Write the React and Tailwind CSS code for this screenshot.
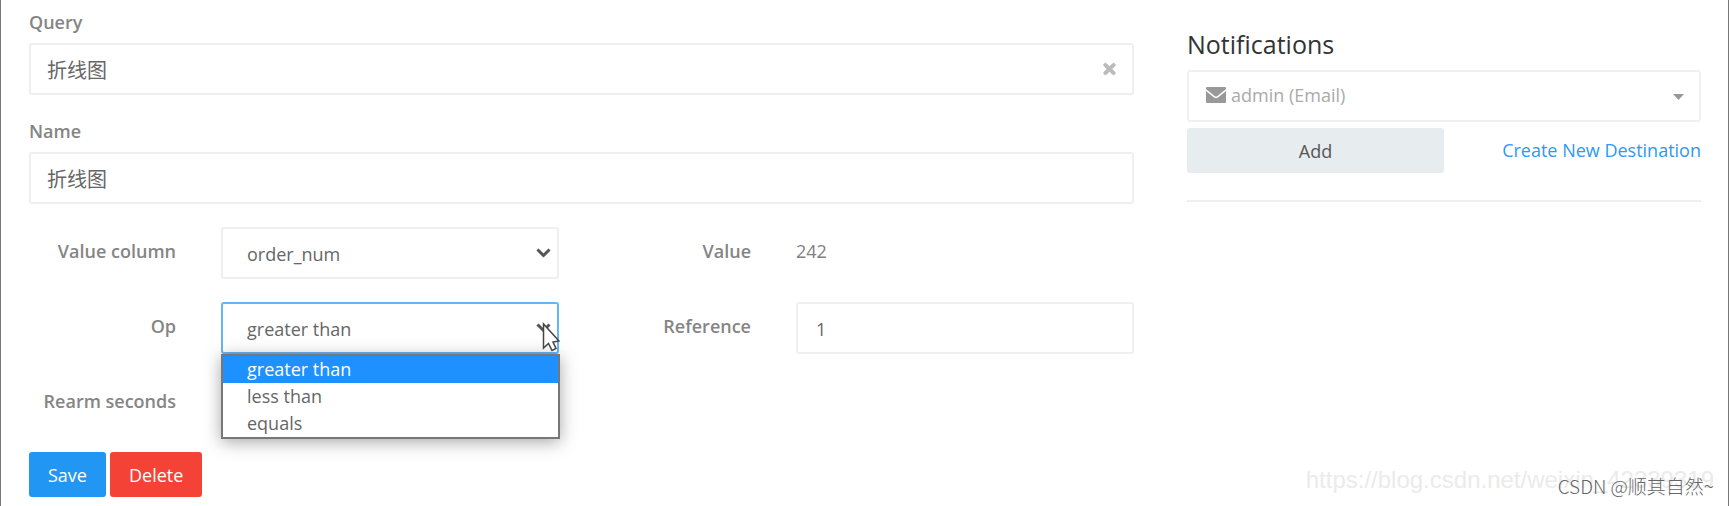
import React, { useState } from 'react';
import { FaTimes } from 'react-icons/fa';

const OPS = ['greater than', 'less than', 'equals'];

const fieldClass = 'w-full h-[52px] rounded-[3px] border-2 bg-white outline-none';

const labelClass = 'font-semibold text-[#858585]';

const Chevron = () => (
  <svg
    className="pointer-events-none absolute right-2 top-1/2 -translate-y-1/2"
    width="15"
    height="10"
    viewBox="0 0 15 10"
    fill="none"
    stroke="#555"
    strokeWidth="3"
  >
    <path d="M1.5 1.5 L7.5 7.5 L13.5 1.5" />
  </svg>
);

const Row = ({ label, htmlFor, children }) => (
  <div className="grid grid-cols-[147fr_338fr] gap-x-[45px]">
    <label htmlFor={htmlFor} className={`${labelClass} pt-[13px] text-right whitespace-nowrap`}>
      {label}
    </label>
    <div className="relative">{children}</div>
  </div>
);

const App = () => {
  const [form, setForm] = useState({
    query: '折线图',
    name: '折线图',
    column: 'order_num',
    op: 'greater than',
    reference: '1',
    rearm: '',
  });

  const handleChange = (e) => {
    setForm({ ...form, [e.target.name]: e.target.value });
  };

  return (
    <div className="relative min-h-screen overflow-hidden border-x border-[#777] bg-white pl-7 pr-[27px] pt-[11px] font-['Open_Sans','Noto_Sans_CJK_SC',sans-serif] text-[18px] leading-[22px]">
      <div className="grid grid-cols-[1105fr_514fr] gap-x-[53px]">
        <form onSubmit={(e) => e.preventDefault()}>
          <label htmlFor="query" className={`${labelClass} block mb-[10px]`}>Query</label>
          <div className="relative mb-[25px]">
            <input id="query" name="query" value={form.query} onChange={handleChange} className={`${fieldClass} border-[#efefef] px-4 text-[20px] text-[#666]`} />
            <button type="button" aria-label="Clear query" className="absolute right-4 top-1/2 -translate-y-1/2 text-[#bbb]">
              <FaTimes size={17} stroke="currentColor" strokeWidth="30" />
            </button>
          </div>

          <label htmlFor="name" className={`${labelClass} block mb-[10px]`}>Name</label>
          <input id="name" name="name" value={form.name} onChange={handleChange} className={`${fieldClass} block border-[#efefef] px-4 text-[20px] text-[#666]`} />

          <div className="mt-[23px] grid grid-cols-2 gap-x-[45px] gap-y-[23px]">
            <Row label="Value column" htmlFor="column">
              <select id="column" name="column" value={form.column} onChange={handleChange} className={`${fieldClass} appearance-none border-[#efefef] px-6 pt-[2px] text-[#666]`}>
                <option>order_num</option>
              </select>
              <Chevron />
            </Row>
            <Row label="Value">
              <p className="pt-[13px] text-[#808080]">242</p>
            </Row>
            <Row label="Op" htmlFor="op">
              <select id="op" name="op" value={form.op} onChange={handleChange} className={`${fieldClass} appearance-none border-[#66b5f8] px-6 pt-[2px] text-[#666]`}>
                {OPS.map((op) => (
                  <option key={op}>{op}</option>
                ))}
              </select>
              <Chevron />
              <ul role="listbox" aria-label="Op" className="absolute left-0 -right-px top-full z-10 border-2 border-[#777] bg-white leading-[27px] text-[#666] shadow-[0_3px_16px_rgba(0,0,0,0.35)]">
                {OPS.map((op) => (
                  <li
                    key={op}
                    role="option"
                    aria-selected={op === form.op}
                    onClick={() => setForm({ ...form, op })}
                    className={op === form.op ? 'bg-[#1e90ff] px-6 text-white' : 'px-6'}
                  >
                    {op}
                  </li>
                ))}
              </ul>
              <svg className="pointer-events-none absolute -right-px top-5 z-20" width="18" height="30" viewBox="0 0 18 30">
                <path d="M1.5 2 V26 L6.5 21.500 L10 28.500 L14 26.500 L11 20 L17 19 Z" fill="#fff" stroke="#444" strokeWidth="1.500" />
              </svg>
            </Row>
            <Row label="Reference" htmlFor="reference">
              <input id="reference" name="reference" value={form.reference} onChange={handleChange} className={`${fieldClass} border-[#efefef] px-[18px] pt-[2px] text-[#666]`} />
            </Row>
            <Row label="Rearm seconds" htmlFor="rearm">
              <input id="rearm" name="rearm" value={form.rearm} onChange={handleChange} className={`${fieldClass} border-[#efefef] px-[18px] text-[#666]`} />
            </Row>
          </div>

          <div className="mt-[23px] flex gap-1 text-white">
            <button type="submit" className="h-[45px] rounded-[3px] bg-[#2196f3] px-[19px]">Save</button>
            <button type="button" className="h-[45px] rounded-[3px] bg-[#f44336] px-[19px]">Delete</button>
          </div>
        </form>

        <aside className="pt-[17px]">
          <h4 className="mb-[10px] text-[25px] font-medium leading-8 text-[#333]">Notifications</h4>
          <button type="button" className={`${fieldClass} flex items-center gap-[5px] border-[#efefef] pl-[17px] pr-[15px] pb-[2px] text-[#aaa]`}>
            <svg width="20" height="16" viewBox="0 0 20 16">
              <path d="M1 0 H19 Q20 0 20 1 V2 L11.500 9 Q10 10 8.500 9 L0 2 V1 Q0 0 1 0 Z" fill="#999" />
              <path d="M0 4 L8 10.500 Q10 12 12 10.500 L20 4 V15 Q20 16 19 16 H1 Q0 16 0 15 Z" fill="#999" />
            </svg>
            <span>admin (Email)</span>
            <svg width="11" height="9" viewBox="0 0 11 9" className="ml-auto">
              <path d="M0 3 H11 L5.500 9 Z" fill="#999" />
            </svg>
          </button>
          <div className="mt-[6px] flex items-center justify-between">
            <button type="button" className="h-[45px] w-1/2 rounded-[3px] bg-[#e7ecee] text-[#555]">Add</button>
            <a href="#new" className="pb-[2px] text-[#2f97f5]">Create New Destination</a>
          </div>
          <hr className="mt-[27px] border-t-2 border-[#efefef]" />
        </aside>
      </div>

      <div className="absolute bottom-3 right-[14px] font-['Liberation_Sans',sans-serif] text-[24px] leading-7 text-[#ebebeb]">
        https://blog.csdn.net/weixin_42339319
      </div>
      <div className="absolute bottom-2 right-[14px] font-['Noto_Sans_CJK_SC',sans-serif] text-[19px] font-light leading-6 text-[#666]">
        CSDN @顺其自然~
      </div>
    </div>
  );
};

export default App;
